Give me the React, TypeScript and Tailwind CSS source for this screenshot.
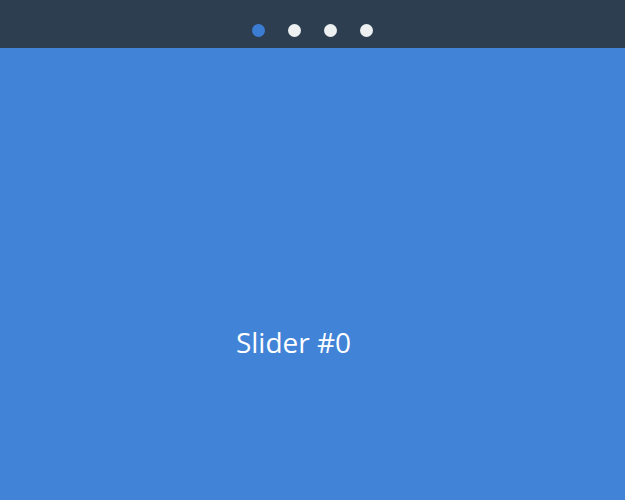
const dots = [0, 1, 2, 3];

const App = () => {
    return (
        <div className="h-[500px] w-full overflow-hidden flex flex-col" style={{ fontFamily: '"Open Sans", sans-serif' }}>
            {/* Pager */}
            <nav className="h-12 shrink-0 bg-[#2c3e50] flex items-end justify-center gap-[23px] pb-[11px]">
                {dots.map((i) => (
                    <span
                        key={i}
                        className={i === 0 ? 'w-[13px] h-[13px] rounded-full bg-[#3b7dd2]' : 'w-[13px] h-[13px] rounded-full bg-[#ecf0f1]'}
                    />
                ))}
            </nav>

            {/* Slide */}
            <main className="flex-1 bg-[#4083d7] flex justify-center pt-[275px] pr-[38px]">
                <h1 className="text-[28px] leading-[38px] text-white">Slider #0</h1>
            </main>
        </div>
    );
};

export default App;
